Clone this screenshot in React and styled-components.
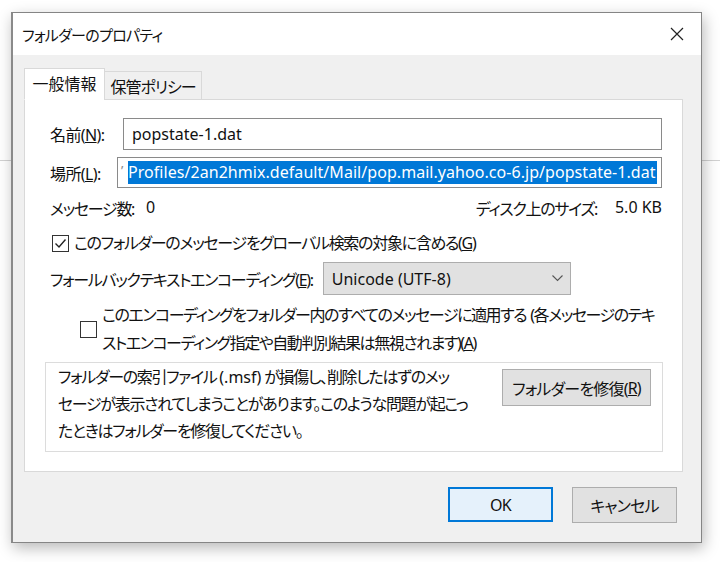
import React from "react";
import styled, { createGlobalStyle } from "styled-components";

const GlobalStyle = createGlobalStyle`
  html, body {
    margin: 0;
    background: #fff;
  }
  body {
    font-family: "Noto Sans", "Noto Sans CJK JP", sans-serif;
    font-feature-settings: "palt";
    color: #111;
  }
`;

const Page = styled.div`
  width: 720px;
  height: 562px;
  box-sizing: border-box;
  padding: 12px 0 0 11px;
  overflow: hidden;
  background: linear-gradient(#d2d2d2, #d2d2d2) 0 160px / 100% 1px no-repeat,
    #fff;
`;

const Dialog = styled.div`
  width: 691px;
  height: 531px;
  box-sizing: border-box;
  border: 1px solid #858585;
  border-left: 2px solid #8a8a8a;
  background: #f0f0f0;
  box-shadow: 2px 5px 14px rgba(0, 0, 0, 0.28);
  display: flex;
  flex-direction: column;
`;

const TitleBar = styled.div`
  height: 42px;
  flex: none;
  background: #fff;
  display: flex;
  align-items: center;
  justify-content: space-between;
  padding: 0 17px 0 9px;
  font-size: 15px;
  letter-spacing: -0.7px;
`;

const CloseButton = styled.div`
  width: 14px;
  height: 14px;
  display: flex;
`;

const Body = styled.div`
  flex: 1;
  display: flex;
  flex-direction: column;
  padding: 13px 18px 0 11px;
`;

const Tabs = styled.div`
  display: flex;
  align-items: flex-end;
  margin-bottom: -1px;
  position: relative;
  z-index: 1;
`;

const Tab = styled.div`
  box-sizing: border-box;
  width: ${(p) => p.$w}px;
  height: ${(p) => (p.$active ? "32px" : "29px")};
  display: flex;
  align-items: center;
  justify-content: center;
  font-size: 16px;
  letter-spacing: ${(p) => (p.$active ? "0" : "-1px")};
  background: ${(p) => (p.$active ? "#fff" : "#f0f0f0")};
  border: 1px solid #d9d9d9;
  border-bottom: ${(p) => (p.$active ? "1px solid #fff" : "1px solid #d9d9d9")};
  margin-left: ${(p) => (p.$active ? "0" : "-1px")};
  padding-bottom: ${(p) => (p.$active ? "2px" : "0")};
`;

const Panel = styled.div`
  height: 373px;
  box-sizing: border-box;
  background: #fff;
  border: 1px solid #d9d9d9;
  display: flex;
  flex-direction: column;
  padding: 18px 20px 0 25px;
  font-size: 16px;
  letter-spacing: -1.3px;
`;

const FieldRow = styled.div`
  display: flex;
  align-items: center;
  gap: 10px;
  height: ${(p) => p.$h || 32}px;
  margin-top: ${(p) => p.$mt || 0}px;
`;

const Label = styled.span`
  white-space: nowrap;
  letter-spacing: ${(p) => (p.$w ? "-0.6px" : "inherit")};
  width: ${(p) => (p.$w ? `${p.$w}px` : "auto")};
  flex: none;
`;

const Key = styled.span`
  text-decoration: underline;
`;

const Latin = styled.span`
  letter-spacing: 0;
`;

const TextBox = styled.div`
  flex: 1;
  min-width: 0;
  height: 100%;
  box-sizing: border-box;
  border: 1px solid #8a8a8a;
  background: #fff;
  display: flex;
  align-items: center;
  padding: 0 ${(p) => (p.$scrolled ? "3px" : "8px")};
  overflow: hidden;
  white-space: nowrap;
  letter-spacing: ${(p) => (p.$scrolled ? "0.05px" : "0")};
`;

const Tick = styled.span`
  color: #888;
  font-size: 13px;
  width: 7px;
  align-self: flex-start;
  margin-top: 3px;
`;

const Selected = styled.span`
  background: #0078d7;
  color: #fff;
  line-height: 23px;
  padding-right: 1px;
`;

const StatRow = styled.div`
  display: flex;
  justify-content: space-between;
  align-items: center;
  height: 20px;
  margin-top: 10px;
`;

const Stat = styled.div`
  display: flex;
  gap: ${(p) => p.$gap}px;
`;

const CheckRow = styled.div`
  display: flex;
  align-items: center;
  gap: 5px;
  margin-top: ${(p) => p.$mt}px;
  padding-left: ${(p) => p.$indent || 2}px;
  line-height: ${(p) => p.$lh || 20}px;
`;

const CheckText = styled.span`
  white-space: nowrap;
  letter-spacing: ${(p) => (p.$tight ? "-1.45px" : "inherit")};
`;

const Select = styled.div`
  width: 248px;
  height: 33px;
  box-sizing: border-box;
  background: #e1e1e1;
  border: 1px solid #adadad;
  display: flex;
  align-items: center;
  justify-content: space-between;
  padding: 0 7px 0 8px;
  letter-spacing: 0;
`;

const GroupBox = styled.div`
  height: 90px;
  box-sizing: border-box;
  margin: 5px -1px 0 -5px;
  border: 1px solid #dcdcdc;
  display: flex;
  justify-content: space-between;
  align-items: flex-start;
  padding: 1px 11px 0 12px;
`;

const Notice = styled.div`
  line-height: 27px;
  white-space: nowrap;
`;

const Button = styled.div`
  box-sizing: border-box;
  width: ${(p) => p.$w}px;
  height: ${(p) => p.$h}px;
  margin-top: ${(p) => p.$mt || 0}px;
  display: flex;
  align-items: center;
  justify-content: center;
  font-size: 16px;
  letter-spacing: -0.8px;
  background: ${(p) => (p.$default ? "#e5f1fb" : "#e1e1e1")};
  border: ${(p) => (p.$default ? "2px solid #0078d7" : "1px solid #adadad")};
  white-space: nowrap;
`;

const Footer = styled.div`
  display: flex;
  justify-content: flex-end;
  gap: 19px;
  padding: 15px 6px 0 0;
`;

const CheckBox = ({ checked }) => (
  <svg width="17" height="17" viewBox="0 0 17 17" style={{ flex: "none" }}>
    <rect x="0.5" y="0.5" width="16" height="16" fill="#fff" stroke="#333" />
    {checked && (
      <path d="M3.5 8.5 L7 12 L13.5 4.5" fill="none" stroke="#222" strokeWidth="1.4" />
    )}
  </svg>
);

export default function App() {
  return (
    <Page>
      <GlobalStyle />
      <Dialog>
        <TitleBar>
          <span>フォルダーのプロパティ</span>
          <CloseButton>
            <svg width="14" height="14" viewBox="0 0 14 14">
              <path d="M1 1 L13 13 M13 1 L1 13" stroke="#222" strokeWidth="1.2" />
            </svg>
          </CloseButton>
        </TitleBar>
        <Body>
          <Tabs>
            <Tab $active $w={81}>
              一般情報
            </Tab>
            <Tab $w={98}>保管ポリシー</Tab>
          </Tabs>
          <Panel>
            <FieldRow>
              <Label $w={63}>
                名前(<Key>N</Key>):
              </Label>
              <TextBox>popstate-1.dat</TextBox>
            </FieldRow>
            <FieldRow $mt={7} $h={31}>
              <Label $w={57}>
                場所(<Key>L</Key>):
              </Label>
              <TextBox $scrolled>
                <Tick>’</Tick>
                <Selected>
                  Profiles/2an2hmix.default/Mail/pop.mail.yahoo.co-6.jp/popstate-1.dat
                </Selected>
              </TextBox>
            </FieldRow>
            <StatRow>
              <Stat $gap={12}>
                <span>メッセージ数:</span>
                <Latin>0</Latin>
              </Stat>
              <Stat $gap={18}>
                <span>ディスク上のサイズ:</span>
                <Latin>5.0 KB</Latin>
              </Stat>
            </StatRow>
            <CheckRow $mt={15}>
              <CheckBox checked />
              <CheckText>
                このフォルダーのメッセージをグローバル検索の対象に含める(<Key>G</Key>)
              </CheckText>
            </CheckRow>
            <FieldRow $mt={9} $h={33}>
              <Label>
                フォールバックテキストエンコーディング(<Key>E</Key>):
              </Label>
              <Select>
                <span>Unicode (UTF-8)</span>
                <svg width="11" height="7" viewBox="0 0 11 7">
                  <path d="M0.5 0.5 L5.5 5.5 L10.5 0.5" fill="none" stroke="#555" strokeWidth="1.1" />
                </svg>
              </Select>
            </FieldRow>
            <CheckRow $mt={6} $indent={30} $lh={28}>
              <CheckBox />
              <CheckText $tight>
                このエンコーディングをフォルダー内のすべてのメッセージに適用する<Latin> </Latin>(各メッセージのテキ
                <br />
                ストエンコーディング指定や自動判別結果は無視されます)(<Key>A</Key>)
              </CheckText>
            </CheckRow>
            <GroupBox>
              <Notice>
                フォルダーの索引ファイル <Latin>(.msf)</Latin> が損傷し、削除したはずのメッ
                <br />
                セージが表示されてしまうことがあります。このような問題が起こっ
                <br />
                たときはフォルダーを修復してください。
              </Notice>
              <Button $w={149} $h={37} $mt={5}>
                フォルダーを修復(<Key>R</Key>)
              </Button>
            </GroupBox>
          </Panel>
          <Footer>
            <Button $default $w={105} $h={35}>
              OK
            </Button>
            <Button $w={105} $h={36}>
              キャンセル
            </Button>
          </Footer>
        </Body>
      </Dialog>
    </Page>
  );
}
